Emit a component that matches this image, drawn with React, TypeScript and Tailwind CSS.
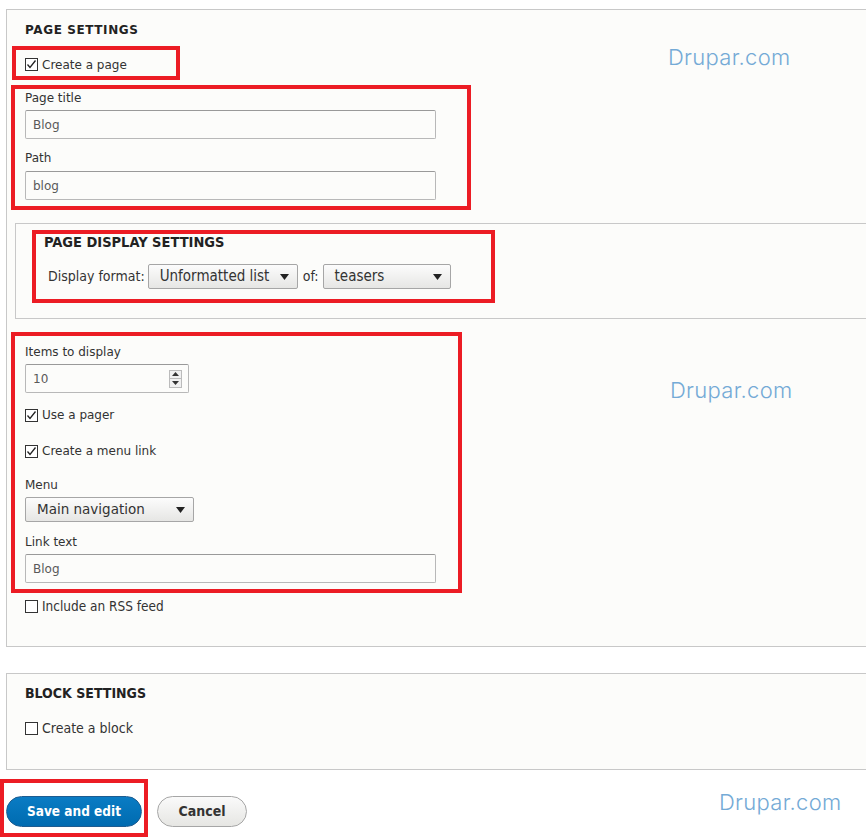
import React from 'react';

const base = { fontFamily: '"DejaVu Sans", "Lucida Grande", sans-serif' };
const cond = { fontFamily: '"DejaVu Sans Condensed", "DejaVu Sans", sans-serif' };

const Check = ({ checked }: { checked?: boolean }) => (
  <svg width="13" height="13" viewBox="0 0 13 13" className="shrink-0">
    <rect x="0.5" y="0.5" width="12" height="12" fill="#fff" stroke="#333" />
    {checked && <path d="M2.5 6.5 L5 9.5 L10.5 2.5" fill="none" stroke="#222" strokeWidth="1.3" />}
  </svg>
);

const CheckRow = ({ label, checked, style, className }: { label: string; checked?: boolean; style?: React.CSSProperties; className?: string }) => (
  <div className={`flex items-center gap-[4px] h-[16px] text-[#333] ${className ?? ''}`} style={style}>
    <Check checked={checked} />
    <span>{label}</span>
  </div>
);

const TextInput = ({ value, width, className }: { value: string; width: string; className?: string }) => (
  <div className={`h-[29px] ${width} border border-[#b8b8b8] border-t-[#999] rounded-[2px] bg-[#fcfcfa] flex items-center pl-[7px] text-[12px] text-[#595959] ${className ?? ''}`}>
    {value}
  </div>
);

const Select = ({ value, width, className, style }: { value: string; width: string; className?: string; style?: React.CSSProperties }) => (
  <div
    className={`h-[25px] ${width} border border-[#a6a6a6] rounded-[2px] bg-gradient-to-b from-[#fcfcfc] to-[#e6e6e4] flex items-center justify-between pl-[11px] pr-[8px] text-[#333] ${className ?? ''}`}
    style={style}
  >
    <span>{value}</span>
    <svg width="9" height="6" viewBox="0 0 9 6"><path d="M0 0 H9 L4.5 6 Z" fill="#222" /></svg>
  </div>
);

const Mark = ({ className }: { className: string }) => (
  <div className={`absolute text-[22px] font-light text-[#74aad6] tracking-[0.3px] ${className}`} style={{ fontFamily: 'Inter, "Open Sans", sans-serif' }}>
    Drupar.com
  </div>
);

export default function App() {
  return (
    <div className="relative w-[866px] h-[840px] overflow-hidden bg-white" style={base}>
      <div className="pt-[9px] pl-[6px]">
        {/* page settings */}
        <div className="w-[880px] border border-r-0 border-[#c8c8c8] bg-[#fcfcfa] pb-[32px]">
          <div className="mt-[12px] ml-[18px] h-[16px] flex items-center text-[12px] font-bold tracking-[0.6px] text-[#222]">PAGE SETTINGS</div>
          <div className="mt-[8px] ml-[5px] w-[168px] h-[34px] border-4 border-[#ec1c24] flex items-center pt-[3px]">
            <CheckRow label="Create a page" checked className="pl-[9px] text-[12px]" />
          </div>
          <div className="mt-[5px] ml-[4px] w-[460px] border-4 border-[#ec1c24] pl-[10px] pt-[1px] pb-[6px] text-[12px] text-[#333]">
            <div className="h-[16px] flex items-center">Page title</div>
            <TextInput value="Blog" width="w-[411px]" className="mt-[4px]" />
            <div className="mt-[11px] h-[16px] flex items-center">Path</div>
            <TextInput value="blog" width="w-[411px]" className="mt-[5px]" />
          </div>

          {/* page display settings */}
          <div className="mt-[13px] ml-[8px] border border-r-0 border-[#c8c8c8] bg-[#fcfcfa] pt-[6px] pb-[15px]">
            <div className="ml-[16px] w-[463px] h-[73px] border-4 border-[#ec1c24] pl-[8px] pt-[1px]" style={cond}>
              <div className="h-[16px] flex items-center text-[14.5px] font-bold text-[#222]">PAGE DISPLAY SETTINGS</div>
              <div className="mt-[13px] flex items-center text-[14px] text-[#333]">
                <span className="ml-[4px]">Display format:</span>
                <Select value="Unformatted list" width="w-[150px]" className="ml-[3px] text-[15px]" style={cond} />
                <span className="ml-[5px]">of:</span>
                <Select value="teasers" width="w-[128px]" className="ml-[4px] text-[15px]" style={cond} />
              </div>
            </div>
          </div>

          <div className="mt-[13px] ml-[4px] w-[451px] border-4 border-[#ec1c24] pt-[8px] pb-[6px] text-[12px] text-[#333]">
            <div className="pl-[10px] h-[16px] flex items-center">Items to display</div>
            <div className="ml-[10px] mt-[4px] h-[29px] w-[164px] border border-[#b8b8b8] border-t-[#999] rounded-[2px] bg-[#fcfcfa] flex items-center justify-between pl-[7px] pr-[6px] text-[#595959]">
              <span>10</span>
              <div className="w-[13px] h-[18px] border border-[#bbb] bg-[#f0f0f0] flex flex-col items-center justify-around">
                <svg width="7" height="4" viewBox="0 0 7 4"><path d="M0 4 H7 L3.5 0 Z" fill="#333" /></svg>
                <div className="w-[11px] h-px bg-[#bbb]" />
                <svg width="7" height="4" viewBox="0 0 7 4"><path d="M0 0 H7 L3.5 4 Z" fill="#333" /></svg>
              </div>
            </div>
            <CheckRow label="Use a pager" checked className="mt-[14px] pl-[10px] text-[12px]" />
            <CheckRow label="Create a menu link" checked className="mt-[20px] pl-[10px] text-[12px]" />
            <div className="pl-[10px] mt-[18px] h-[16px] flex items-center">Menu</div>
            <Select value="Main navigation" width="w-[169px]" className="ml-[10px] mt-[4px] text-[13.5px]" />
            <div className="pl-[10px] mt-[12px] h-[16px] flex items-center">Link text</div>
            <TextInput value="Blog" width="w-[411px]" className="ml-[10px] mt-[4px]" />
          </div>
          <CheckRow label="Include an RSS feed" className="mt-[5px] pl-[18px] text-[13.5px]" style={cond} />
        </div>

        {/* block settings */}
        <div className="mt-[26px] w-[880px] border border-r-0 border-[#c8c8c8] bg-[#fcfcfa] pt-[11px] pb-[33px]" style={cond}>
          <div className="ml-[18px] h-[16px] flex items-center text-[14px] font-bold text-[#222]">BLOCK SETTINGS</div>
          <CheckRow label="Create a block" className="mt-[19px] pl-[18px] text-[14px]" style={cond} />
        </div>
      </div>

      {/* actions */}
      <div className="mt-[9px] flex items-start">
        <div className="w-[148px] border-4 border-[#ec1c24] pl-[2px] pr-[2px] pt-[13px] pb-[6px]">
          <div className="h-[31px] w-[136px] rounded-full bg-gradient-to-b from-[#0a7cc4] to-[#006bb0] border border-[#1e5c90] flex items-center justify-center text-white text-[13.5px] font-bold" style={cond}>
            Save and edit
          </div>
        </div>
        <div className="ml-[9px] mt-[17px] h-[31px] w-[90px] rounded-full bg-gradient-to-b from-[#fafafa] to-[#e6e6e3] border border-[#a6a6a6] flex items-center justify-center text-[#333] text-[14px] font-bold" style={cond}>
          Cancel
        </div>
      </div>

      <Mark className="left-[668px] top-[41px]" />
      <Mark className="left-[670px] top-[374px]" />
      <Mark className="left-[719px] top-[786px]" />
    </div>
  );
}
